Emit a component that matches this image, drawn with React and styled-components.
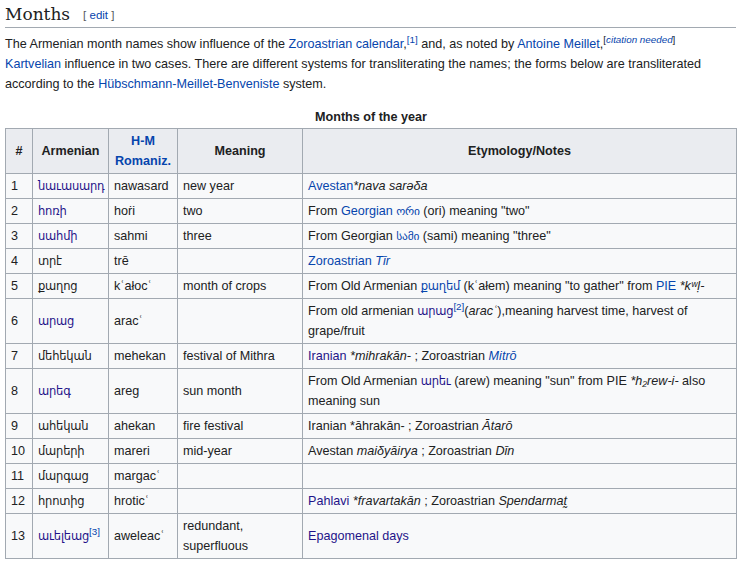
import React from 'react';
import styled, { createGlobalStyle } from 'styled-components';

const GlobalStyle = createGlobalStyle`
  body {
    margin: 0;
    background: #fff;
    color: #202122;
    font-family: "Liberation Sans", Arial, "DejaVu Sans", sans-serif;
    font-size: 12.6px;
    line-height: 20px;
  }
`

const Page = styled.div`
  width: 731px;
  padding-left: 5px;
`
const Heading = styled.h2`
  margin: 0;
  padding-top: 2px;
  font-family: "DejaVu Serif", "Liberation Serif", serif;
  font-weight: normal;
  font-size: 17px;
  line-height: 24px;
  border-bottom: 1px solid #a2a9b1;
`
const EditSection = styled.span`
  margin-left: 13px;
  font-family: "Liberation Sans", Arial, sans-serif;
  font-size: 11.5px;
  color: #54595d;
  vertical-align: 1px;
`
const Link = styled.a`
  color: ${p => (p.$visited ? '#1f1489' : '#0645ad')};
  text-decoration: none;
  cursor: pointer;
`
const Lead = styled.p`
  margin: 6px 0 0;
  max-width: 718px;
`
const Sup = styled.sup`
  font-size: 0.78em;
  line-height: 0;
  vertical-align: super;
`
const Table = styled.table`
  margin-top: 13px;
  width: 731px;
  table-layout: fixed;
  border-collapse: collapse;
  background: #f8f9fa;
  color: #202122;
  font-size: 12.6px;
  line-height: 20px;
`
const Caption = styled.caption`
  font-weight: bold;
  text-align: center;
  line-height: 20px;
  padding-bottom: 1px;
`
const Col = styled.col`
  width: ${p => p.$w}px;
`
const HeadCell = styled.th`
  background: #eaecf0;
  border: 1px solid #a2a9b1;
  padding: 2px 5px;
  text-align: center;
  font-weight: bold;
  vertical-align: middle;
`
const Cell = styled.td`
  border: 1px solid #a2a9b1;
  padding: 2px 5px;
  vertical-align: middle;
  text-align: left;
`
const Armenian = styled.span`
  font-family: "DejaVu Sans", "Noto Sans", sans-serif;
  font-size: 11.5px;
  letter-spacing: -0.2px;
`

const rows = [
  {
    n: 1,
    arm: 'նաւասարդ',
    link: true,
    rom: 'nawasard',
    meaning: 'new year',
    notes: (
      <>
        <Link>Avestan</Link>
        <i>*nava sarəδa</i>
      </>
    ),
  },
  {
    n: 2,
    arm: 'հոռի',
    link: true,
    rom: 'hoṙi',
    meaning: 'two',
    notes: (
      <>
        From <Link>Georgian</Link> <Link><Armenian>ორი</Armenian></Link> (ori) meaning "two"
      </>
    ),
  },
  {
    n: 3,
    arm: 'սահմի',
    link: true,
    rom: 'sahmi',
    meaning: 'three',
    notes: (
      <>
        From Georgian <Link><Armenian>სამი</Armenian></Link> (sami) meaning "three"
      </>
    ),
  },
  {
    n: 4,
    arm: 'տրէ',
    rom: 'trē',
    meaning: '',
    notes: (
      <>
        <Link>Zoroastrian</Link> <Link><i>Tīr</i></Link>
      </>
    ),
  },
  {
    n: 5,
    arm: 'քաղոց',
    rom: 'kʿałocʿ',
    meaning: 'month of crops',
    notes: (
      <>
        From Old Armenian <Link><Armenian>քաղեմ</Armenian></Link> (kʿałem) meaning "to gather" from <Link>PIE</Link> <i>*kʷḷ-</i>
      </>
    ),
  },
  {
    n: 6,
    arm: 'արաց',
    link: true,
    rom: 'aracʿ',
    meaning: '',
    notes: (
      <>
        From old armenian <Link $visited><Armenian>արաց</Armenian></Link><Sup><Link>[2]</Link></Sup>(<i>aracʿ</i>),meaning harvest time, harvest of grape/fruit
      </>
    ),
  },
  {
    n: 7,
    arm: 'մեհեկան',
    rom: 'mehekan',
    meaning: 'festival of Mithra',
    notes: (
      <>
        <Link $visited>Iranian</Link> <i>*mihrakān-</i> ; Zoroastrian <Link><i>Mitrō</i></Link>
      </>
    ),
  },
  {
    n: 8,
    arm: 'արեգ',
    link: true,
    rom: 'areg',
    meaning: 'sun month',
    notes: (
      <>
        From Old Armenian <Link $visited><Armenian>արեւ</Armenian></Link> (arew) meaning "sun" from PIE <i>*h₂rew-i-</i> also meaning sun
      </>
    ),
  },
  {
    n: 9,
    arm: 'ահեկան',
    rom: 'ahekan',
    meaning: 'fire festival',
    notes: (
      <>
        Iranian *āhrakān- ; Zoroastrian <i>Ātarō</i>
      </>
    ),
  },
  {
    n: 10,
    arm: 'մարերի',
    rom: 'mareri',
    meaning: 'mid-year',
    notes: (
      <>
        Avestan <i>maiδyāirya</i> ; Zoroastrian <i>Dīn</i>
      </>
    ),
  },
  { n: 11, arm: 'մարգաց', rom: 'margacʿ', meaning: '', notes: null },
  {
    n: 12,
    arm: 'հրոտից',
    rom: 'hroticʿ',
    meaning: '',
    notes: (
      <>
        <Link $visited>Pahlavi</Link> <i>*fravartakān</i> ; Zoroastrian <i>Spendarmat̰</i>
      </>
    ),
  },
  {
    n: 13,
    arm: 'աւելեաց',
    link: true,
    sup: '[3]',
    rom: 'aweleacʿ',
    meaning: 'redundant, superfluous',
    notes: <Link $visited>Epagomenal days</Link>,
  },
];

const App = () => {
  return (
    <Page>
      <GlobalStyle />
      <Heading>
        Months
        <EditSection>
          [ <Link>edit</Link> ]
        </EditSection>
      </Heading>
      <Lead>
        The Armenian month names show influence of the <Link>Zoroastrian calendar</Link>,<Sup><Link>[1]</Link></Sup> and, as noted by <Link>Antoine Meillet</Link>,<Sup>[<Link><i>citation needed</i></Link>]</Sup> <Link>Kartvelian</Link> influence in two cases. There are different systems for transliterating the names; the forms below are transliterated according to the <Link>Hübschmann-Meillet-Benveniste</Link> system.
      </Lead>
      <Table>
        <Caption>Months of the year</Caption>
        <colgroup>
          <Col $w={27} />
          <Col $w={76} />
          <Col $w={69} />
          <Col $w={125} />
          <Col $w={434} />
        </colgroup>
        <thead>
          <tr>
            <HeadCell>#</HeadCell>
            <HeadCell>Armenian</HeadCell>
            <HeadCell><Link>H-M Romaniz.</Link></HeadCell>
            <HeadCell>Meaning</HeadCell>
            <HeadCell>Etymology/Notes</HeadCell>
          </tr>
        </thead>
        <tbody>
          {rows.map(row => (
            <tr key={row.n}>
              <Cell>{row.n}</Cell>
              <Cell>
                {row.link ? (
                  <Link $visited><Armenian>{row.arm}</Armenian></Link>
                ) : (
                  <Armenian>{row.arm}</Armenian>
                )}
                {row.sup && <Sup><Link>{row.sup}</Link></Sup>}
              </Cell>
              <Cell>{row.rom}</Cell>
              <Cell>{row.meaning}</Cell>
              <Cell>{row.notes}</Cell>
            </tr>
          ))}
        </tbody>
      </Table>
    </Page>
  );
};

export default App;
